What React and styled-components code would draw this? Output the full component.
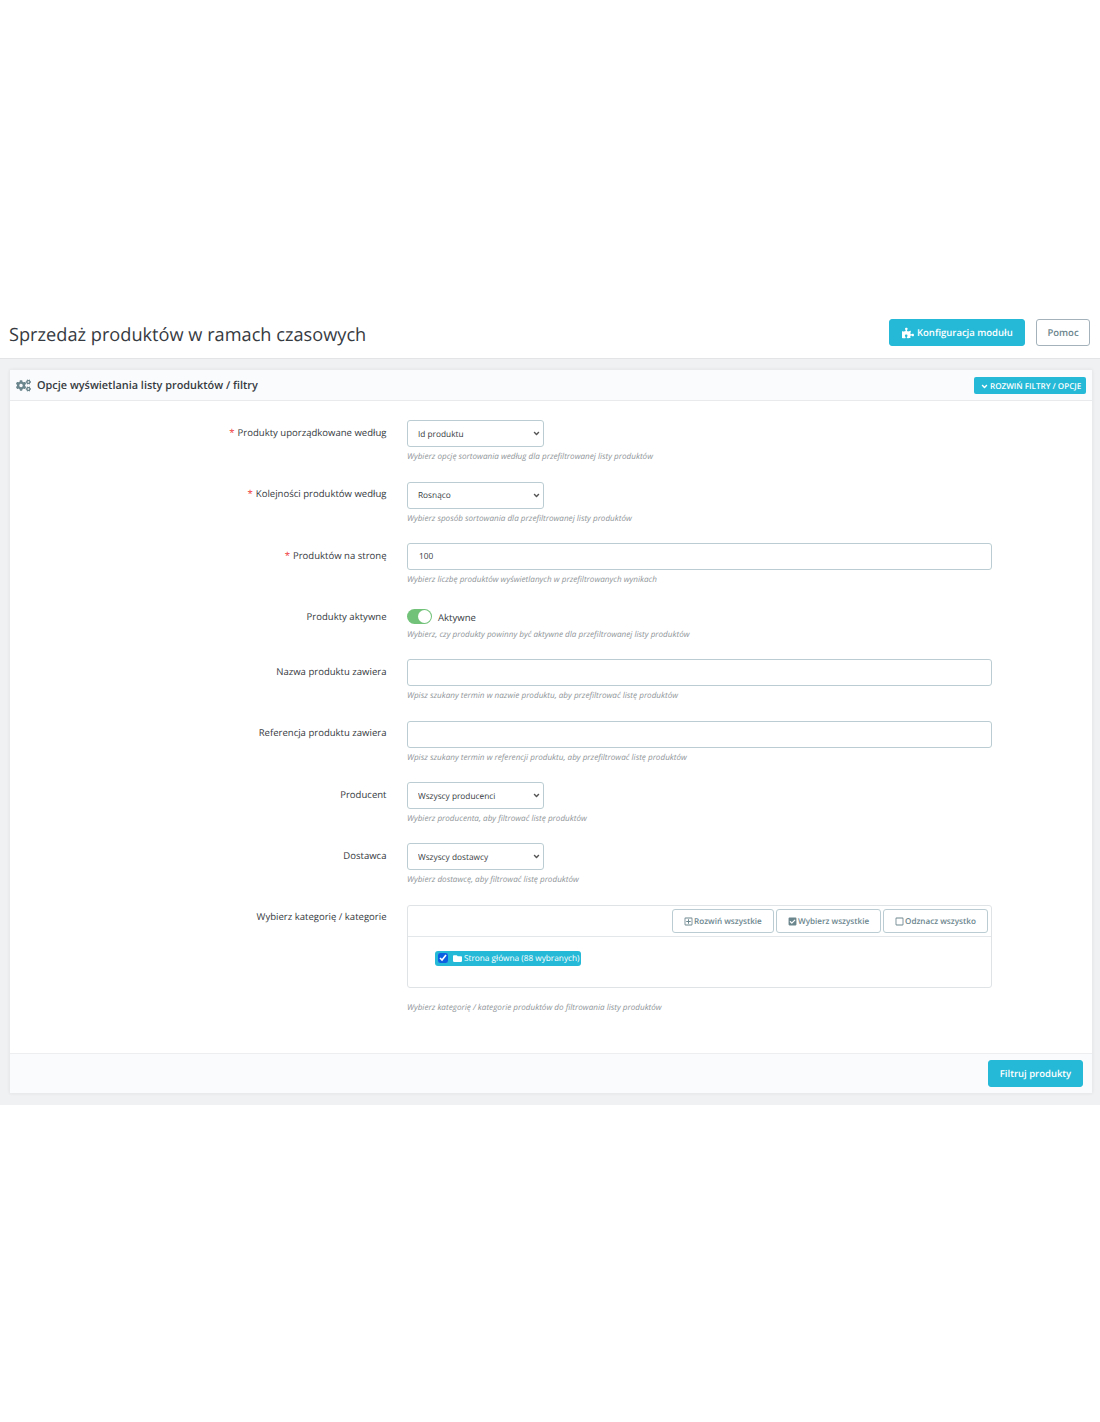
import React from "react";
import styled, { createGlobalStyle } from "styled-components";
import { FaPuzzlePiece, FaCogs, FaAngleDown, FaRegPlusSquare, FaCheckSquare, FaRegSquare, FaFolder } from "react-icons/fa";

const Global = createGlobalStyle`
  html, body { margin: 0; padding: 0; background: #fff; }
  body { font-family: "Open Sans", "Liberation Sans", sans-serif; color: #363a41; text-rendering: geometricPrecision; }
  button, input, select { text-rendering: geometricPrecision; }
  * { box-sizing: border-box; }
`;

const Page = styled.div`
  height: 1422px;
  padding-top: 310px;
`;

const Header = styled.header`
  height: 48px;
  padding: 9px 10px 0 9px;
  display: flex;
  align-items: flex-start;
  justify-content: space-between;
`;

const Title = styled.h1`
  margin: 3px 0 0;
  font-size: 18.2px;
  line-height: 26px;
  font-weight: 400;
  color: #363a41;
`;

const HeaderActions = styled.div`
  display: flex;
  gap: 11px;
`;

const PrimaryButton = styled.button`
  height: 27px;
  width: 136px;
  padding: 0 0 0 12px;
  display: flex;
  align-items: center;
  gap: 3px;
  border: 1px solid #25b9d7;
  border-radius: 3px;
  background: #25b9d7;
  color: #fff;
  font: 600 9.5px "Open Sans", sans-serif;
`;

const OutlineButton = styled.button`
  height: 27px;
  width: 54px;
  padding: 0;
  border: 1px solid #a4b3bb;
  border-radius: 3px;
  background: #fff;
  color: #6c868e;
  font: 600 9.5px "Open Sans", sans-serif;
`;

const Body = styled.main`
  height: 747px;
  padding: 10px 7px 0 9px;
  background: #eff1f2;
  border-top: 1px solid #e2e4e6;
`;

const Card = styled.section`
  height: 725px;
  display: flex;
  flex-direction: column;
  background: #fff;
  border: 1px solid #e8eaec;
  border-radius: 3px;
  box-shadow: 0 0 3px rgba(0, 0, 0, 0.06);
`;

const CardHead = styled.div`
  height: 31px;
  flex: none;
  display: flex;
  align-items: center;
  padding: 0 6px 0 6px;
  background: #fafbfc;
  border-bottom: 1px solid #e8eaec;
`;

const HeadTitle = styled.h2`
  margin: 0 0 0 6px;
  flex: 1;
  font-size: 10.9px;
  font-weight: 600;
  color: #363a41;
`;

const CogIcon = styled(FaCogs)`
  width: 15px;
  height: 15px;
  color: #6c868e;
`;

const SmallButton = styled.button`
  height: 17px;
  width: 112px;
  padding: 2px 0 0 6px;
  display: flex;
  align-items: center;
  gap: 1px;
  border: 0;
  border-radius: 2px;
  background: #25b9d7;
  color: #fff;
  font: 600 8.1px "Open Sans", sans-serif;
  white-space: nowrap;
`;

const Form = styled.form`
  flex: 1;
  padding-top: 19.3px;
`;

const Row = styled.div`
  display: grid;
  grid-template-columns: 376.5px 585px;
  column-gap: 20.5px;
  height: ${(p) => p.$h || 61.4}px;
`;

const Label = styled.label`
  text-align: right;
  font-size: 9.55px;
  line-height: 14px;
  padding-top: 5.6px;
  color: #363a41;
`;

const Star = styled.span`
  color: #ef3b3b;
  margin-right: 3px;
`;

const Field = styled.div`
  min-width: 0;
`;

const SelectWrap = styled.div`
  position: relative;
  width: 137px;
  height: 27px;
`;

const Select = styled.select`
  display: block;
  width: 100%;
  height: 27px;
  padding: 1px 6px 0 10px;
  appearance: none;
  background: #fff;
  border: 1px solid #bbcdd2;
  border-radius: 3px;
  color: #363a41;
  font: 400 8.3px "Open Sans", sans-serif;
`;

const Chevron = styled(FaAngleDown)`
  position: absolute;
  right: 3px;
  top: 9px;
  width: 9px;
  height: 9px;
  color: #555;
  pointer-events: none;
`;

const Input = styled.input`
  display: block;
  width: 100%;
  height: 27px;
  padding: 0 11px;
  background: #fff;
  border: 1px solid #bbcdd2;
  border-radius: 3px;
  color: #363a41;
  font: 400 8.3px "Open Sans", sans-serif;
`;

const Help = styled.p`
  margin: ${(p) => p.$mt ?? 3}px 0 0;
  font-size: 8.15px;
  line-height: 13px;
  font-style: italic;
  color: #8f9599;
`;

const SwitchRow = styled.div`
  display: flex;
  align-items: center;
  gap: 6px;
  height: 17px;
  margin-top: 4px;
`;

const SwitchText = styled.span`
  font-size: 9.55px;
  padding-top: 2px;
`;

const Track = styled.span`
  width: 25px;
  height: 15px;
  position: relative;
  display: block;
  border-radius: 8px;
  background: #72c279;
`;

const Knob = styled.span`
  position: absolute;
  right: 1px;
  top: 1px;
  width: 13px;
  height: 13px;
  border-radius: 50%;
  background: #fff;
`;

const Tree = styled.div`
  height: 83px;
  border: 1px solid #dfe3e6;
  border-radius: 3px;
`;

const TreeBar = styled.div`
  height: 31px;
  padding: 3px 3px 0 0;
  display: flex;
  justify-content: flex-end;
  gap: 2px;
  border-bottom: 1px solid #e4e7e9;
`;

const TreeButton = styled.button`
  height: 24px;
  width: ${(p) => p.$w}px;
  padding: 1px 0 0 11px;
  display: flex;
  align-items: center;
  gap: 1px;
  background: #fff;
  border: 1px solid #bbcdd2;
  border-radius: 3px;
  color: #6c868e;
  font: 600 8.15px "Open Sans", sans-serif;
  white-space: nowrap;
`;

const TreeBody = styled.div`
  padding: 14px 0 0 27px;
`;

const TreeNode = styled.div`
  display: inline-flex;
  align-items: center;
  height: 15px;
  padding: 0 2px 0 3px;
  gap: 2px;
  vertical-align: top;
  background: #25b9d7;
  border-radius: 3px;
  color: #fff;
  font-size: 8.25px;
`;

const Check = styled.input`
  margin: 0 3px 0 0;
  width: 10px;
  height: 10px;
  accent-color: #0b5fe0;
`;

const CardFoot = styled.div`
  height: 40px;
  flex: none;
  display: flex;
  align-items: center;
  justify-content: flex-end;
  padding: 0 9px;
  background: #fafbfc;
  border-top: 1px solid #eceef0;
`;

const SubmitButton = styled.button`
  height: 27px;
  width: 95px;
  padding: 0;
  border: 1px solid #25b9d7;
  border-radius: 3px;
  background: #25b9d7;
  color: #fff;
  font: 600 9.5px "Open Sans", sans-serif;
`;

const rows1 = [
  { label: "Produkty uporządkowane według", req: true, value: "Id produktu", help: "Wybierz opcję sortowania według dla przefiltrowanej listy produktów" },
  { label: "Kolejności produktów według", req: true, value: "Rosnąco", help: "Wybierz sposób sortowania dla przefiltrowanej listy produktów" },
];

const SelectRow = ({ label, req, value, help }) => (
  <Row>
    <Label>{req && <Star>*</Star>}{label}</Label>
    <Field>
      <SelectWrap>
        <Select defaultValue={value}><option>{value}</option></Select>
        <Chevron />
      </SelectWrap>
      <Help>{help}</Help>
    </Field>
  </Row>
);

const InputRow = ({ label, req, value, help }) => (
  <Row>
    <Label>{req && <Star>*</Star>}{label}</Label>
    <Field>
      <Input defaultValue={value} />
      <Help>{help}</Help>
    </Field>
  </Row>
);

export default function App() {
  return (
    <Page>
      <Global />
      <Header>
        <Title>Sprzedaż produktów w ramach czasowych</Title>
        <HeaderActions>
          <PrimaryButton type="button"><FaPuzzlePiece size={12} />Konfiguracja modułu</PrimaryButton>
          <OutlineButton type="button">Pomoc</OutlineButton>
        </HeaderActions>
      </Header>
      <Body>
        <Card>
          <CardHead>
            <CogIcon />
            <HeadTitle>Opcje wyświetlania listy produktów / filtry</HeadTitle>
            <SmallButton type="button"><FaAngleDown size={9} />ROZWIŃ FILTRY / OPCJE</SmallButton>
          </CardHead>
          <Form>
            {rows1.map((r) => <SelectRow key={r.label} {...r} />)}
            <InputRow req label="Produktów na stronę" value="100" help="Wybierz liczbę produktów wyświetlanych w przefiltrowanych wynikach" />
            <Row $h={54.8}>
              <Label>Produkty aktywne</Label>
              <Field>
                <SwitchRow><Track><Knob /></Track><SwitchText>Aktywne</SwitchText></SwitchRow>
                <Help>Wybierz, czy produkty powinny być aktywne dla przefiltrowanej listy produktów</Help>
              </Field>
            </Row>
            <InputRow label="Nazwa produktu zawiera" help="Wpisz szukany termin w nazwie produktu, aby przefiltrować listę produktów" />
            <InputRow label="Referencja produktu zawiera" help="Wpisz szukany termin w referencji produktu, aby przefiltrować listę produktów" />
            <SelectRow label="Producent" value="Wszyscy producenci" help="Wybierz producenta, aby filtrować listę produktów" />
            <SelectRow label="Dostawca" value="Wszyscy dostawcy" help="Wybierz dostawcę, aby filtrować listę produktów" />
            <Row $h={120}>
              <Label>Wybierz kategorię / kategorie</Label>
              <Field>
                <Tree>
                  <TreeBar>
                    <TreeButton $w={102} type="button"><FaRegPlusSquare size={9} />Rozwiń wszystkie</TreeButton>
                    <TreeButton $w={105} type="button"><FaCheckSquare size={9} />Wybierz wszystkie</TreeButton>
                    <TreeButton $w={105} type="button"><FaRegSquare size={9} />Odznacz wszystko</TreeButton>
                  </TreeBar>
                  <TreeBody>
                    <TreeNode><Check type="checkbox" defaultChecked /><FaFolder size={9} />Strona główna (88 wybranych)</TreeNode>
                  </TreeBody>
                </Tree>
                <Help $mt={13}>Wybierz kategorię / kategorie produktów do filtrowania listy produktów</Help>
              </Field>
            </Row>
          </Form>
          <CardFoot>
            <SubmitButton type="button">Filtruj produkty</SubmitButton>
          </CardFoot>
        </Card>
      </Body>
    </Page>
  );
}
